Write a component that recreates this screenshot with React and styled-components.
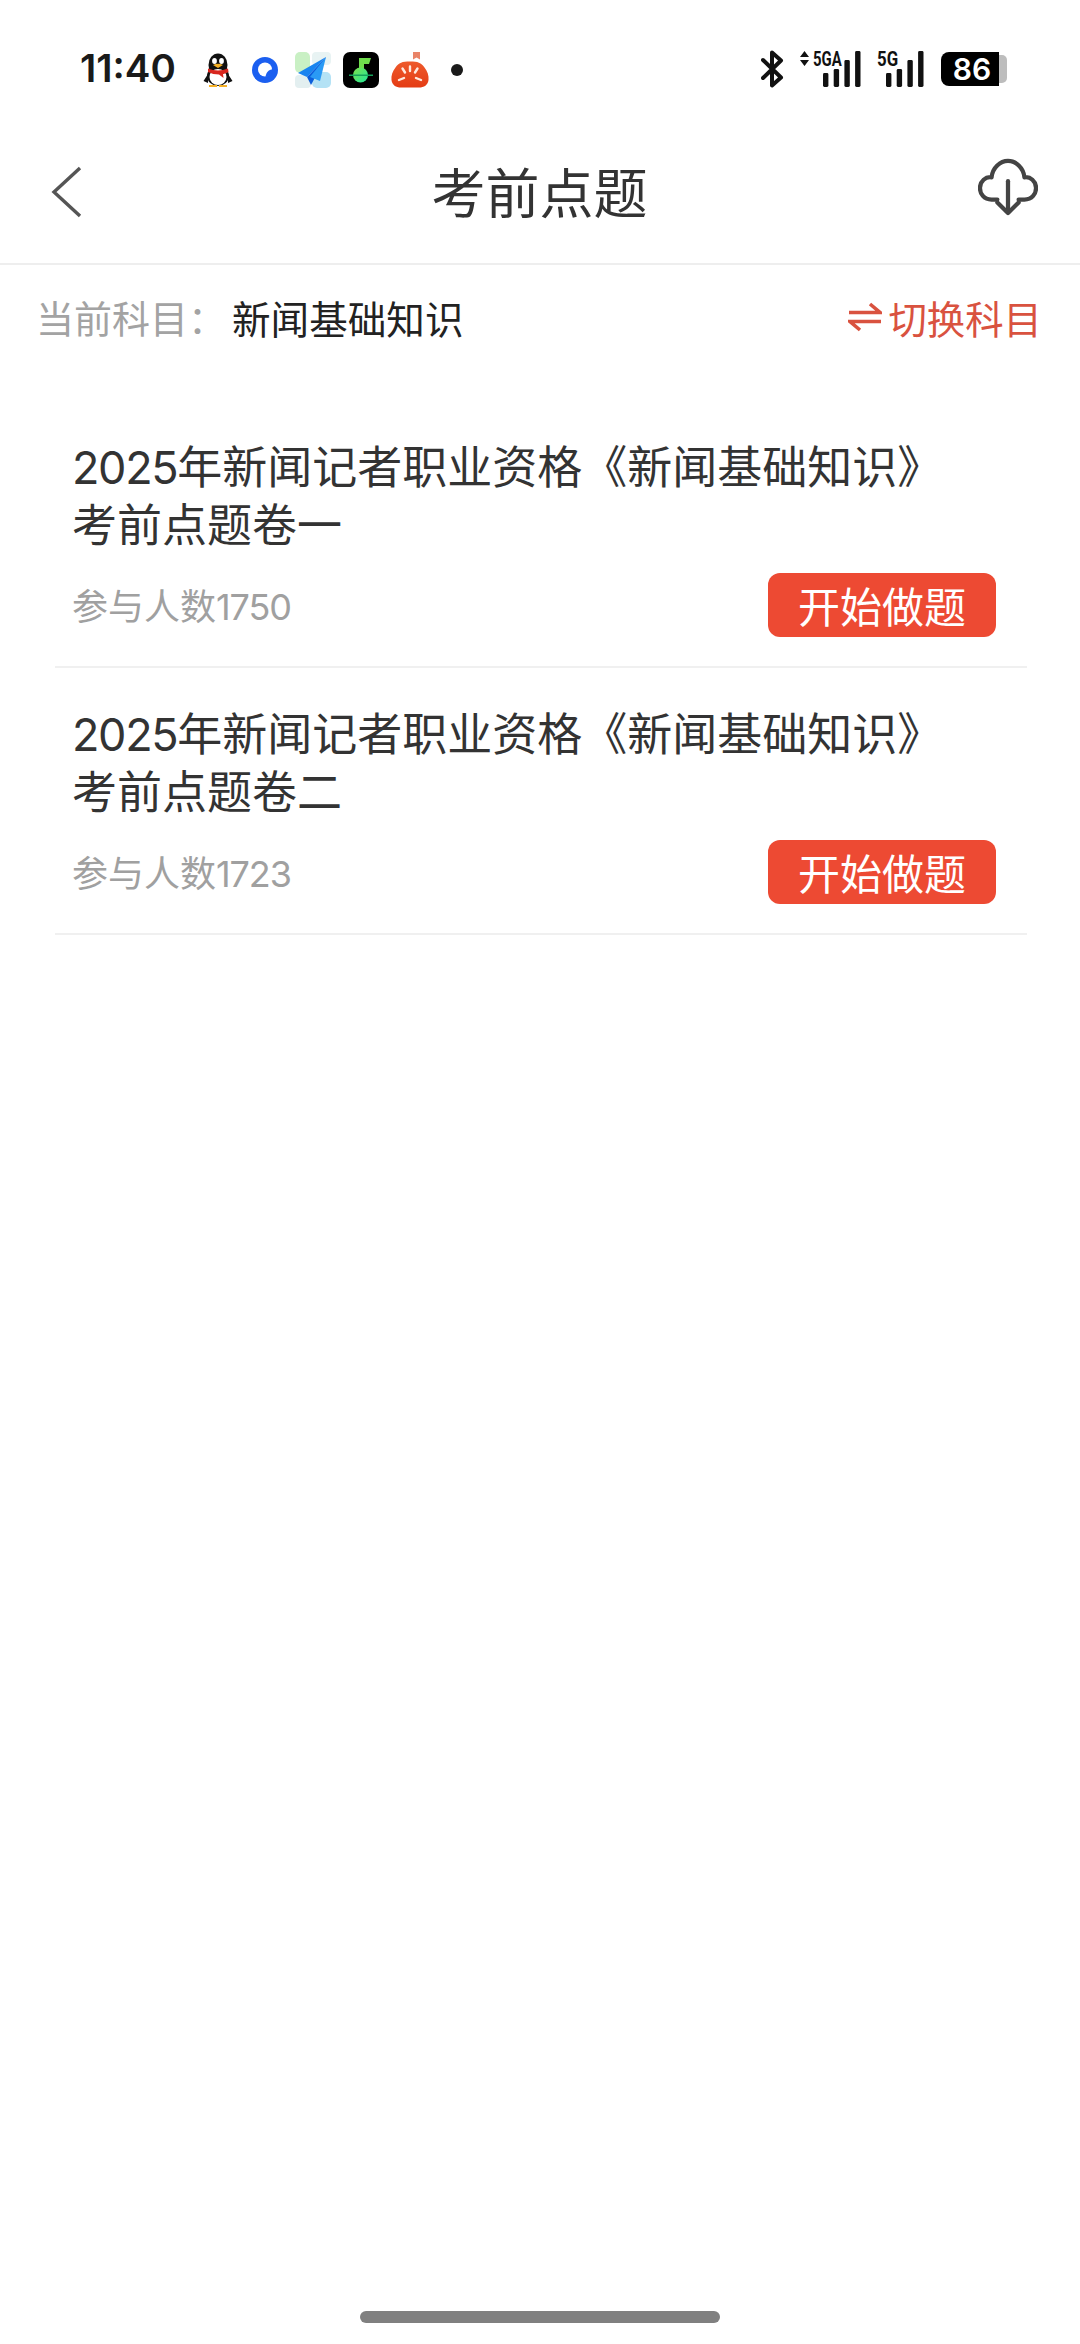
import React from 'react';
import styled, { createGlobalStyle } from 'styled-components';

const GlobalStyle = createGlobalStyle`
  html, body {
    margin: 0;
    padding: 0;
    background: #fff;
  }
  body {
    font-family: "Noto Sans CJK SC", "Noto Sans", sans-serif;
  }
`;

const papers = [
  { id: 1, name: '考前点题卷一', count: 1750 },
  { id: 2, name: '考前点题卷二', count: 1723 },
];

const App = () => (
  <Page>
    <GlobalStyle />
    <StatusBar>
      <Clock>11:40</Clock>
      <NotifyIcons>
        <NotifySlot $gap={19}><QQIcon /></NotifySlot>
        <NotifySlot $gap={17}><CircleAppIcon /></NotifySlot>
        <NotifySlot $gap={12}><PlaneIcon /></NotifySlot>
        <NotifySlot $gap={12}><MusicIcon /></NotifySlot>
        <NotifySlot $gap={22}><TomatoIcon /></NotifySlot>
        <Dot />
      </NotifyIcons>
      <SystemIcons>
        <svg width="23" height="38" viewBox="0 0 23 38" fill="none" stroke="#111" strokeWidth="4" strokeLinejoin="round" strokeLinecap="round">
          <path d="M2 10 L20 27.5 L11 35.5 V2.5 L20 10.5 L2 28" />
        </svg>
        <Signal $width={62}>
          <ArrowsSvg width="11" height="17" viewBox="0 0 11 17">
            <path d="M1 7 L5.5 1 L10 7 Z M1 10 L5.5 16 L10 10 Z" fill="#111" />
          </ArrowsSvg>
          <SignalLabel $left={14} $scale={0.71}>5GA</SignalLabel>
          <SignalBars offset={24} />
        </Signal>
        <Signal $width={48}>
          <SignalLabel $left={1} $scale={0.8}>5G</SignalLabel>
          <SignalBars offset={10} />
        </Signal>
        <Battery>
          <BatteryBody>86</BatteryBody>
          <BatteryCap />
        </Battery>
      </SystemIcons>
    </StatusBar>

    <Header>
      <svg width="32" height="52" viewBox="0 0 32 52" fill="none">
        <path d="M29 2 L3 26 L29 50" stroke="#555" strokeWidth="3.4" />
      </svg>
      <Title>考前点题</Title>
      <CloudSvg width="60" height="58" viewBox="0 0 62 60" fill="none" stroke="#444" strokeWidth="4.4" strokeLinecap="round" strokeLinejoin="round">
        <path d="M20 43 H14 C6 43 2 37 2 31 C2 24 8 19 14 20 C15 10 23 3 31 3 C39 3 47 10 48 20 C54 19 60 24 60 31 C60 37 56 43 48 43 H42" />
        <path d="M31 24 V56" />
        <path d="M20 46 L31 57 L42 46" />
      </CloudSvg>
    </Header>

    <SubjectRow>
      <SubjectInfo>
        <SubjectLabel>当前科目：</SubjectLabel>
        <SubjectName>新闻基础知识</SubjectName>
      </SubjectInfo>
      <SwitchLink>
        <svg width="34" height="30" viewBox="0 0 34 30" fill="none" stroke="#d9523f" strokeWidth="3.6">
          <path d="M1 10.5 H32 L22 2" />
          <path d="M33 19.5 H2 L12 28" />
        </svg>
        切换科目
      </SwitchLink>
    </SubjectRow>

    <PaperList>
      {papers.map((paper) => (
        <PaperItem key={paper.id}>
          <PaperTitle>
            <Digits>2025</Digits>年新闻记者职业资格《新闻基础知识》
            <br />
            {paper.name}
          </PaperTitle>
          <PaperFooter>
            <PaperCount>参与人数<Digits>{paper.count}</Digits></PaperCount>
            <StartButton>开始做题</StartButton>
          </PaperFooter>
        </PaperItem>
      ))}
    </PaperList>

    <HomeBar />
  </Page>
);

export default App;

// Status bar drawings
const QQIcon = () => (
  <svg width="30" height="34" viewBox="0 0 30 34">
    <ellipse cx="15" cy="12" rx="9.5" ry="11.5" fill="#111" />
    <ellipse cx="15" cy="23" rx="11" ry="10" fill="#111" />
    <path d="M5 21 L0.5 28 L5 30 Z M25 21 L29.5 28 L25 30 Z" fill="#111" />
    <ellipse cx="15" cy="24" rx="8.5" ry="8" fill="#fff" />
    <ellipse cx="11.5" cy="8" rx="2.4" ry="3" fill="#fff" />
    <ellipse cx="18.5" cy="8" rx="2.4" ry="3" fill="#fff" />
    <path d="M10 12 Q15 9.5 20 12 L15 15 Z" fill="#f5b025" />
    <path d="M5 15.5 Q15 19.5 25 15.5 L25.5 19 Q21 21 20 21 L20.5 25 L16 21.5 Q10 21.5 5 19 Z" fill="#d8261e" />
    <path d="M6 32 H14 V34 H6 Z M16 32 H24 V34 H16 Z" fill="#f5b025" />
  </svg>
);

const CircleAppIcon = () => (
  <svg width="26" height="26" viewBox="0 0 26 26">
    <circle cx="13" cy="13" r="13" fill="#1b5ff0" />
    <circle cx="13" cy="12.5" r="7" fill="#fff" />
    <path d="M20.5 12.5 C17 12.5 14 15 13.5 20 C17 19.5 21 17 20.5 12.5 Z" fill="#1b5ff0" />
  </svg>
);

const PlaneIcon = () => (
  <svg width="36" height="36" viewBox="0 0 36 36">
    <rect x="0" y="0" width="15" height="21" rx="5" fill="#c9f0c4" />
    <rect x="17" y="0" width="19" height="13" rx="4" fill="#e8f3f3" />
    <rect x="0" y="23" width="16" height="13" rx="4" fill="#e3eff0" />
    <rect x="17" y="20" width="19" height="16" rx="5" fill="#b4e2f5" />
    <path d="M31 5 L3 21 L12 25 Z" fill="#1a84f0" />
    <path d="M31 5 L12 25 L16 33 Z" fill="#0c5fdc" />
    <path d="M31 5 L15 25 L25 29 Z" fill="#2a9af5" />
  </svg>
);

const MusicIcon = () => (
  <svg width="36" height="36" viewBox="0 0 36 36">
    <defs>
      <linearGradient id="noteGreen" x1="0" y1="0" x2="1" y2="1">
        <stop offset="0" stopColor="#7fe04a" />
        <stop offset="1" stopColor="#1fe89a" />
      </linearGradient>
    </defs>
    <rect width="36" height="36" rx="7" fill="#000" />
    <path d="M16 6 H28 L26 12 H21 V19 H16 Z" fill="#6fdc4c" />
    <circle cx="17.5" cy="23" r="7.5" fill="url(#noteGreen)" />
    <rect x="6" y="22.5" width="24" height="1.5" fill="#16a05a" />
  </svg>
);

const TomatoIcon = () => (
  <svg width="38" height="36" viewBox="0 0 38 36">
    <defs>
      <linearGradient id="tomatoRed" x1="0" y1="0" x2="0" y2="1">
        <stop offset="0" stopColor="#ee5a2c" />
        <stop offset="1" stopColor="#e43c14" />
      </linearGradient>
    </defs>
    <path d="M22 0 H29 V7.5 L25.5 5.5 L22 7.5 Z" fill="#e98468" />
    <path d="M19 9.5 C27 9.5 30 10.5 33.5 15.5 C36.5 19.5 38 23.5 37.5 28 C37 33 33 35.5 28 35.5 H10 C5 35.5 1 33 0.5 28 C0 23.5 1.5 19.5 4.5 15.5 C8 10.5 11 9.5 19 9.5 Z" fill="url(#tomatoRed)" />
    <path d="M19 14.5 V19 M11.5 16.5 L14 20.5 M26.5 16.5 L24 20.5 M8 28 L13 26 M30 28 L25 26" stroke="#ffe9df" strokeWidth="2.4" strokeLinecap="round" />
  </svg>
);

const SignalBars = ({ offset }) => (
  <BarsSvg width={offset + 38} height="38" viewBox={`0 0 ${offset + 38} 38`}>
    {[23, 19, 10, 1].map((top, i) => (
      <rect key={i} x={offset + i * 10.7} y={top} width="5.4" height={37 - top} rx="1.4" fill="#111" />
    ))}
  </BarsSvg>
);

// Styled Components
const Page = styled.div`
  position: relative;
  width: 1080px;
  height: 2344px;
  overflow: hidden;
  background: #fff;
`;

const StatusBar = styled.div`
  height: 56px;
  padding: 40px 73px 0 80px;
  display: flex;
  align-items: center;
`;

const Clock = styled.div`
  width: 123px;
  font-family: Inter, "Noto Sans", sans-serif;
  font-size: 38.5px;
  font-weight: 600;
  color: #1a1a1a;
`;

const NotifyIcons = styled.div`
  display: flex;
  align-items: center;
  flex: 1;
  margin-top: 3px;
`;

const NotifySlot = styled.div`
  display: flex;
  margin-right: ${({ $gap }) => $gap}px;
`;

const Dot = styled.span`
  width: 12px;
  height: 12px;
  border-radius: 50%;
  background: #1a1a1a;
`;

const SystemIcons = styled.div`
  display: flex;
  align-items: center;
  gap: 15px;
  margin-top: 2px;
`;

const Signal = styled.div`
  position: relative;
  width: ${({ $width }) => $width}px;
  height: 38px;
`;

const ArrowsSvg = styled.svg`
  position: absolute;
  left: 0;
  top: 0;
`;

const BarsSvg = styled.svg`
  display: block;
`;

const SignalLabel = styled.span`
  position: absolute;
  left: ${({ $left }) => $left}px;
  top: 0;
  font-family: Roboto, sans-serif;
  font-size: 21px;
  font-weight: 700;
  line-height: 18px;
  color: #111;
  transform: scaleX(${({ $scale }) => $scale});
  transform-origin: left center;
`;

const Battery = styled.div`
  display: flex;
  align-items: center;
  margin-left: 2px;
`;

const BatteryBody = styled.div`
  width: 54px;
  height: 34px;
  padding-left: 4px;
  border-radius: 8px 0 0 8px;
  background: #000;
  color: #fff;
  font-family: Inter, sans-serif;
  font-size: 30px;
  font-weight: 600;
  line-height: 34px;
  text-align: center;
`;

const BatteryCap = styled.div`
  width: 8px;
  height: 28px;
  border-radius: 0 5px 5px 0;
  background: #bdbdbd;
`;

const Header = styled.div`
  height: 143px;
  padding: 24px 42px 0 51px;
  display: flex;
  align-items: center;
  justify-content: space-between;
  border-bottom: 2px solid #eeeeee;
`;

const Title = styled.div`
  font-size: 54px;
  margin-top: -2px;
  margin-left: 18px;
  color: #333;
`;

const CloudSvg = styled.svg`
  margin-top: -9px;
`;

const SubjectRow = styled.div`
  height: 103px;
  padding: 0 38px 3px 36px;
  display: flex;
  align-items: center;
  justify-content: space-between;
`;

const SubjectInfo = styled.div`
  display: flex;
  align-items: center;
`;

const SubjectLabel = styled.span`
  width: 196px;
  font-size: 38px;
  color: #a3a3a3;
`;

const SubjectName = styled.span`
  font-size: 38.6px;
  color: #222;
`;

const SwitchLink = styled.div`
  display: flex;
  align-items: center;
  gap: 6px;
  font-size: 38.4px;
  color: #d9523f;
`;

const PaperList = styled.div`
  padding: 30px 53px 0 55px;
`;

const PaperItem = styled.div`
  padding: 35px 31px 29px 17px;
  border-bottom: 2px solid #f0f0f0;
`;

const PaperTitle = styled.div`
  font-size: 45px;
  line-height: 58px;
  color: #333;
  white-space: nowrap;
`;

const Digits = styled.span`
  font-family: Inter, sans-serif;
  line-height: 0;
  letter-spacing: -0.03em;
`;

const PaperFooter = styled.div`
  margin-top: 21px;
  display: flex;
  align-items: center;
  justify-content: space-between;
`;

const PaperCount = styled.span`
  padding-bottom: 3px;
  font-size: 36px;
  color: #a0a0a0;
`;

const StartButton = styled.button`
  width: 228px;
  height: 64px;
  padding: 0;
  border: none;
  border-radius: 12px;
  background: #ed4a33;
  color: #fff;
  font-family: inherit;
  font-size: 42px;
  line-height: 64px;
`;

const HomeBar = styled.div`
  position: absolute;
  left: 360px;
  bottom: 21px;
  width: 360px;
  height: 12px;
  border-radius: 6px;
  background: #808080;
`;
